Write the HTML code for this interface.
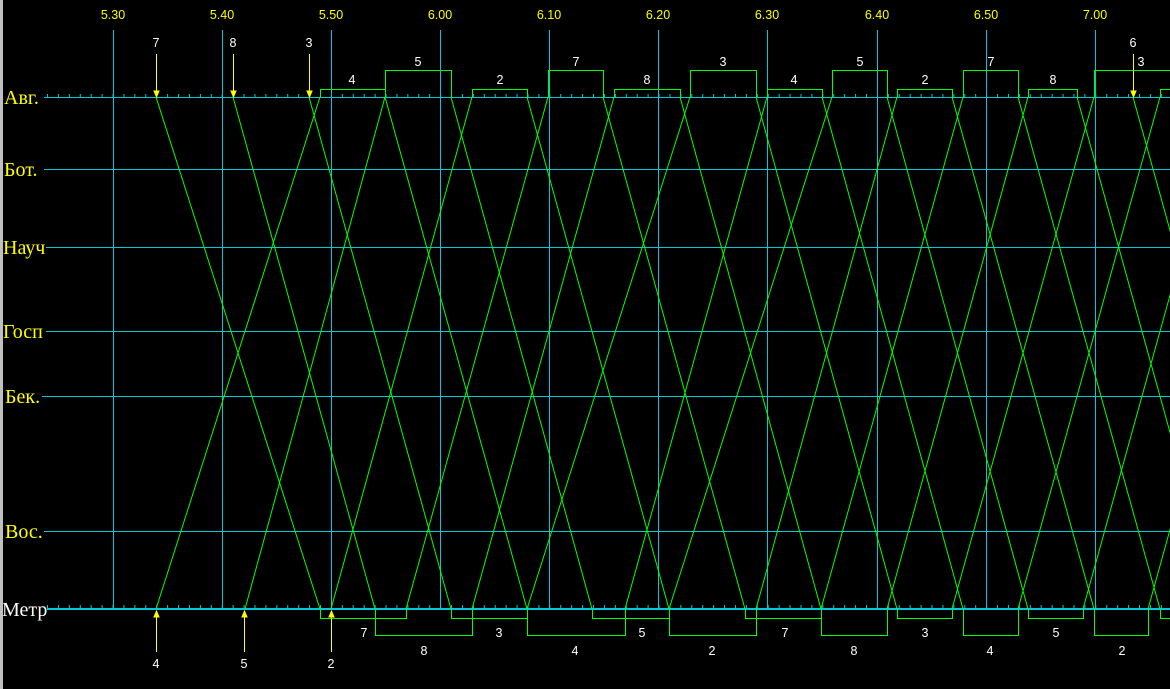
<!DOCTYPE html>
<html><head><meta charset="utf-8"><style>
html,body{margin:0;padding:0;background:#000;width:1170px;height:689px;overflow:hidden}
svg{display:block}
.st{font-family:"Liberation Serif",serif;font-size:20px;fill:#ffff00}
.tm{font-family:"Liberation Sans",sans-serif;font-size:12.5px;fill:#ffff00;text-anchor:middle}
.n{font-family:"Liberation Sans",sans-serif;font-size:12.5px;fill:#fff;text-anchor:middle}
</style></head><body>
<svg width="1170" height="689" viewBox="0 0 1170 689" xmlns="http://www.w3.org/2000/svg">
<rect x="0" y="0" width="3" height="689" fill="#c0c0c0"/>
<g fill="#00c8d8">
<rect x="113" y="30" width="1" height="579"/>
<rect x="222" y="30" width="1" height="579"/>
<rect x="331" y="30" width="1" height="579"/>
<rect x="440" y="30" width="1" height="579"/>
<rect x="549" y="30" width="1" height="579"/>
<rect x="658" y="30" width="1" height="579"/>
<rect x="767" y="30" width="1" height="579"/>
<rect x="877" y="30" width="1" height="579"/>
<rect x="986" y="30" width="1" height="579"/>
<rect x="1095" y="30" width="1" height="579"/>
<rect x="44" y="97" width="1126" height="1"/>
<rect x="44" y="169" width="1126" height="1"/>
<rect x="46" y="247" width="1124" height="1"/>
<rect x="46" y="331" width="1124" height="1"/>
<rect x="42" y="396" width="1128" height="1"/>
<rect x="44" y="531" width="1126" height="1"/>
<rect x="47" y="608" width="1123" height="2"/>
</g>
<line x1="47" y1="95.5" x2="1170" y2="95.5" stroke="#00c8d8" stroke-width="3" stroke-dasharray="1 9.92"/>
<line x1="47" y1="606.5" x2="1170" y2="606.5" stroke="#00c8d8" stroke-width="3" stroke-dasharray="1 9.92"/>
<g fill="none" stroke="#00ff00" stroke-width="1">
<path d="M320.5 97V89.5H385.5V97 M385.5 97V70.5H451.5V97 M472.5 97V89.5H527.5V97 M548.5 97V70.5H603.5V97 M614.5 97V89.5H680.5V97 M690.5 97V70.5H756.5V97 M767.5 97V89.5H822.5V97 M832.5 97V70.5H887.5V97 M897.5 97V89.5H952.5V97 M963.5 97V70.5H1018.5V97 M1028.5 97V89.5H1077.5V97 M1094.5 97V70.5H1171 M1160.5 97V89.5H1171"/>
<path d="M320.5 609V618.5H406.5V609 M375.5 609V635.5H472.5V609 M451.5 609V618.5H527.5V609 M527.5 609V635.5H625.5V609 M592.5 609V618.5H669.5V609 M669.5 609V635.5H756.5V609 M745.5 609V618.5H821.5V609 M821.5 609V635.5H887.5V609 M897.5 609V618.5H952.5V609 M963.5 609V635.5H1018.5V609 M1028.5 609V618.5H1083.5V609 M1094.5 609V635.5H1148.5V609 M1160.5 609V618.5H1171"/>
<path d="M156 97L320 609 M233 97L375 609 M309 97L451 609 M385 97L527 609 M451 97L592 609 M527 97L669 609 M603 97L745 609 M680 97L821 609 M756 97L897 609 M822 97L963 609 M887 97L1028 609 M952 97L1094 609 M1018 97L1160 609 M1077 97L1219 609 M1133 97L1275 609"/>
<path d="M156 609L320 97 M245 609L385 97 M331 609L472 97 M406 609L548 97 M472 609L614 97 M527 609L690 97 M625 609L767 97 M669 609L832 97 M756 609L897 97 M821 609L963 97 M887 609L1028 97 M952 609L1094 97 M1018 609L1160 97 M1083 609L1225 97 M1148 609L1290 97"/>
</g>
<g stroke="#ffff00" stroke-width="1" fill="#ffff00">
<line x1="156.5" y1="54" x2="156.5" y2="96"/><path d="M154 91L156.5 97L159 91Z"/>
<line x1="233.5" y1="54" x2="233.5" y2="96"/><path d="M231 91L233.5 97L236 91Z"/>
<line x1="309.5" y1="54" x2="309.5" y2="96"/><path d="M307 91L309.5 97L312 91Z"/>
<line x1="1133.5" y1="54" x2="1133.5" y2="96"/><path d="M1131 91L1133.5 97L1136 91Z"/>
<line x1="156.5" y1="612" x2="156.5" y2="652"/><path d="M154 617L156.5 611L159 617Z"/>
<line x1="244.5" y1="612" x2="244.5" y2="652"/><path d="M242 617L244.5 611L247 617Z"/>
<line x1="331.5" y1="612" x2="331.5" y2="652"/><path d="M329 617L331.5 611L334 617Z"/>
</g>
<text class="tm" x="113" y="19">5.30</text>
<text class="tm" x="222" y="19">5.40</text>
<text class="tm" x="331" y="19">5.50</text>
<text class="tm" x="440" y="19">6.00</text>
<text class="tm" x="549" y="19">6.10</text>
<text class="tm" x="658" y="19">6.20</text>
<text class="tm" x="767" y="19">6.30</text>
<text class="tm" x="877" y="19">6.40</text>
<text class="tm" x="986" y="19">6.50</text>
<text class="tm" x="1095" y="19">7.00</text>
<text class="st" x="4" y="104">Авг.</text>
<text class="st" x="4" y="176">Бот.</text>
<text class="st" x="3" y="254">Науч</text>
<text class="st" x="3" y="338">Госп</text>
<text class="st" x="5" y="403">Бек.</text>
<text class="st" x="5" y="538">Вос.</text>
<text class="st" x="2" y="616" style="fill:#fff">Метр</text>
<g>
<text class="n" x="156" y="47">7</text><text class="n" x="233" y="47">8</text><text class="n" x="309" y="47">3</text><text class="n" x="1133" y="47">6</text>
<text class="n" x="352" y="84">4</text><text class="n" x="418" y="66">5</text><text class="n" x="500" y="84">2</text><text class="n" x="576" y="66">7</text><text class="n" x="647" y="84">8</text><text class="n" x="723" y="66">3</text><text class="n" x="794" y="84">4</text><text class="n" x="860" y="66">5</text><text class="n" x="925" y="84">2</text><text class="n" x="991" y="66">7</text><text class="n" x="1053" y="84">8</text><text class="n" x="1141" y="66">3</text>
<text class="n" x="364" y="637">7</text><text class="n" x="424" y="655">8</text><text class="n" x="499" y="637">3</text><text class="n" x="575" y="655">4</text><text class="n" x="642" y="637">5</text><text class="n" x="712" y="655">2</text><text class="n" x="785" y="637">7</text><text class="n" x="854" y="655">8</text><text class="n" x="925" y="637">3</text><text class="n" x="990" y="655">4</text><text class="n" x="1056" y="637">5</text><text class="n" x="1122" y="655">2</text>
<text class="n" x="156" y="668">4</text><text class="n" x="244" y="668">5</text><text class="n" x="331" y="668">2</text>
</g>
</svg>
</body></html>
